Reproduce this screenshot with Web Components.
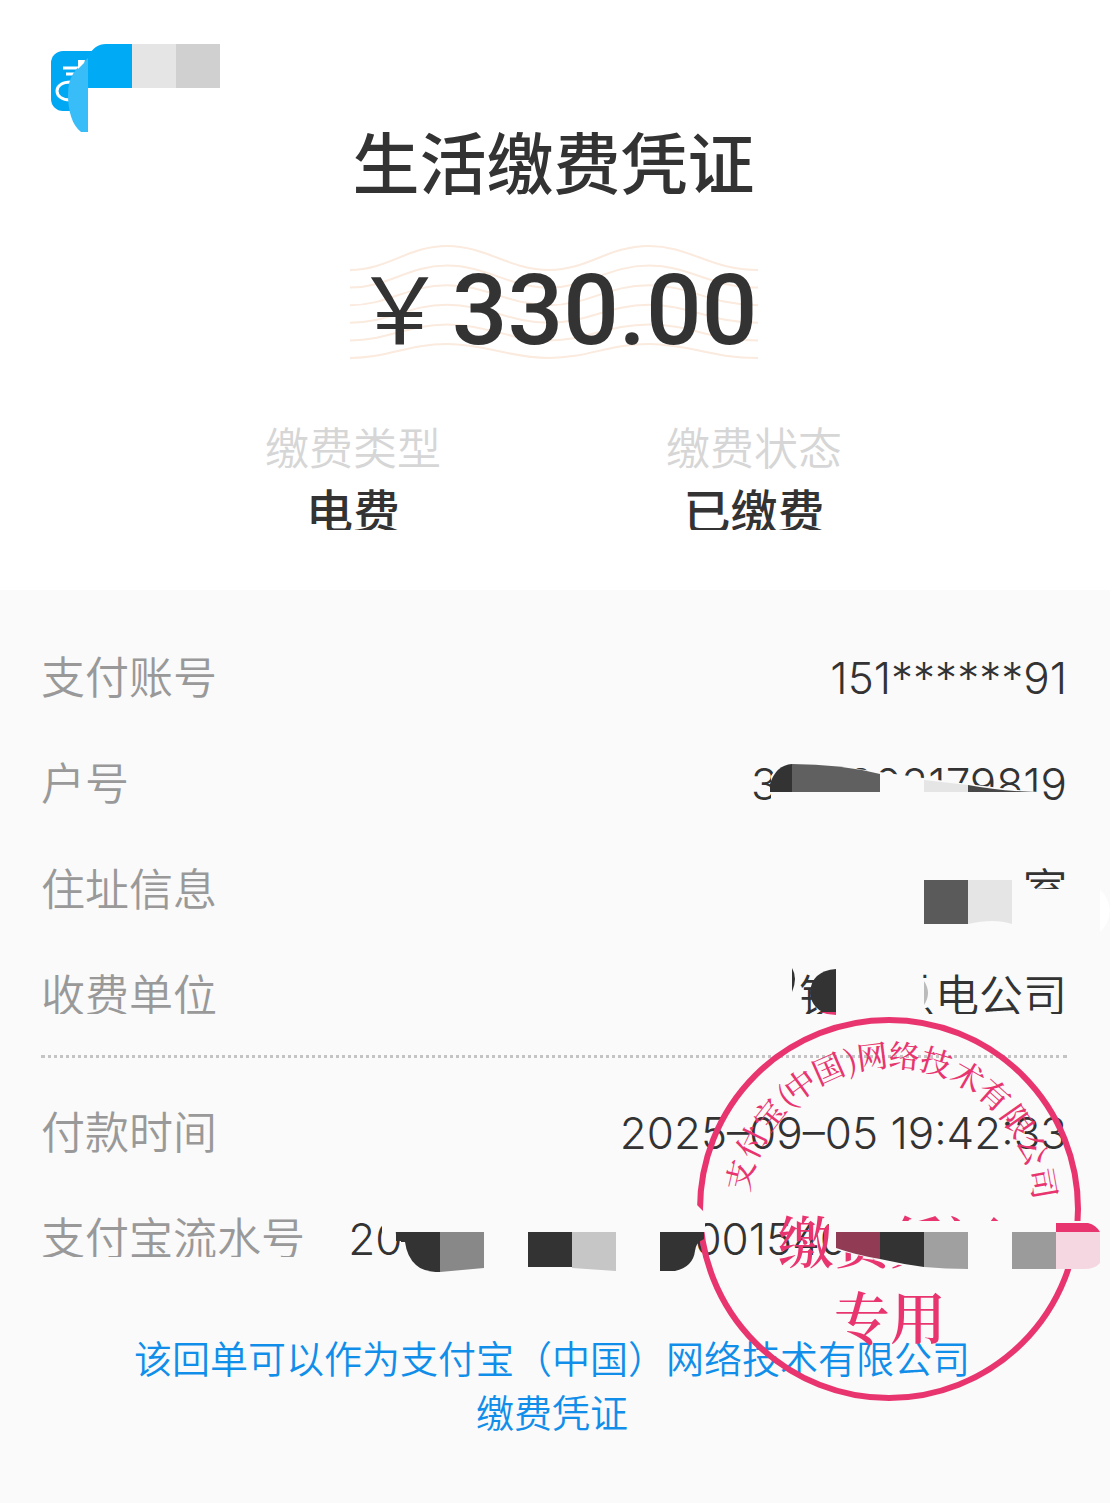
<!DOCTYPE html>
<html lang="zh-CN">
<head>
<meta charset="utf-8">
<meta name="viewport" content="width=device-width, initial-scale=1">
<title>生活缴费凭证</title>
<style>
  body {
    margin: 0;
    background: #fff;
    color: #333;
    font-family: Inter, "Noto Sans CJK SC", sans-serif;
  }
</style>
</head>
<body>
<payment-receipt>
  <receipt-head slot="head">
    <receipt-amount slot="amount">330.00</receipt-amount>
    <receipt-fact label="缴费类型">电费</receipt-fact>
    <receipt-fact label="缴费状态">已缴费</receipt-fact>
  </receipt-head>
  <receipt-row label="支付账号">151******91</receipt-row>
  <receipt-row label="户号">3<hidden-part size="s"></hidden-part>1002179819</receipt-row>
  <receipt-row label="住址信息">室</receipt-row>
  <receipt-row label="收费单位">镇<hidden-part size="m"></hidden-part>供电公司</receipt-row>
  <receipt-divider></receipt-divider>
  <receipt-row label="付款时间">2025–09–05 19:42:33</receipt-row>
  <receipt-row label="支付宝流水号">20<hidden-part size="l"></hidden-part>001540<hidden-part size="xl"></hidden-part></receipt-row>
  <receipt-note slot="note">该回单可以作为支付宝（中国）网络技术有限公司<br>缴费凭证</receipt-note>
  <receipt-marks slot="marks"></receipt-marks>
</payment-receipt>

<script>
class PaymentReceipt extends HTMLElement {
  connectedCallback() {
    this.attachShadow({ mode: 'open' });
    this.shadowRoot.innerHTML = `
      <style>
        :host {
          display: flex;
          flex-direction: column;
          min-height: 100vh;
          margin-right: 3px;
        }
        .details {
          position: relative;
          flex: 1;
          padding: 35px 43px 62px 41px;
          background: #fafafa;
        }
      </style>
      <slot name="head"></slot>
      <section class="details">
        <slot></slot>
        <slot name="note"></slot>
        <slot name="marks"></slot>
      </section>
    `;
  }
}
customElements.define('payment-receipt', PaymentReceipt);

class ReceiptHead extends HTMLElement {
  connectedCallback() {
    this.attachShadow({ mode: 'open' });
    this.shadowRoot.innerHTML = `
      <style>
        :host {
          display: flex;
          flex-direction: column;
          align-items: center;
          position: relative;
          padding: 115px 3px 60px 0;
        }
        .logo {
          position: absolute;
          left: 44px;
          top: 40px;
        }
        h1 {
          margin: 0;
          font-size: 67px;
          line-height: 100px;
          font-weight: 500;
        }
        .facts {
          display: grid;
          grid-template-columns: 1fr 1fr;
          width: 802px;
          max-width: 100%;
          height: 112px;
          margin-top: 58px;
          overflow: hidden;
        }
      </style>
      <svg class="logo" width="180" height="96" viewBox="44 40 180 96" aria-hidden="true">
        <rect x="51" y="51" width="60" height="60" rx="12" fill="#00a8f3"/>
        <path fill="#fff" d="M88 88h23v24H88z"/>
        <g fill="none" stroke="#fff" stroke-width="3">
          <path d="M63 68h15M66 74h10"/>
          <path d="M71 82c-9 0-14 4-14 9s5 9 13 9"/>
        </g>
        <path fill="#38bdf8" d="M88 58c-13 11-20 19-20 36 0 17 4 31 13 38h7z"/>
        <path fill="#fff" d="M78 60h7l-1 3-6 6z"/>
        <path fill="#00aaf5" d="M88 56c5-8 10-12 18-12h26v44H88z"/>
        <path fill="#e5e5e5" d="M132 44h44v44h-44z"/>
        <path fill="#d0d0d0" d="M176 44h44v44h-44z"/>
      </svg>
      <h1>生活缴费凭证</h1>
      <slot name="amount"></slot>
      <div class="facts"><slot></slot></div>
    `;
  }
}
customElements.define('receipt-head', ReceiptHead);

class ReceiptAmount extends HTMLElement {
  connectedCallback() {
    // six guilloche lines that flatten towards the bottom
    let waves = '';
    for (let i = 0; i < 6; i++) {
      const y = 26 + i * 88 / 5;
      const a = 24 - i * 2;
      waves += `<path d="M0 ${y}C38 ${y} 58 ${y - a} 97 ${y - a}S160 ${y} 199 ${y}S258 ${y - a} 299 ${y - a}S360 ${y} 408 ${y}"/>`;
    }
    this.attachShadow({ mode: 'open' });
    this.shadowRoot.innerHTML = `
      <style>
        :host {
          display: flex;
          align-items: baseline;
          justify-content: flex-end;
          position: relative;
          box-sizing: border-box;
          width: 408px;
          height: 116px;
          margin-top: 29px;
          font: 500 98px/120px Roboto, sans-serif;
        }
        svg {
          position: absolute;
          left: 0;
          top: 0;
        }
        .yen {
          position: relative;
          margin-right: 6px;
          font-family: "Noto Sans CJK SC", sans-serif;
          font-size: 92px;
          font-weight: 400;
        }
        .sum {
          position: relative;
        }
      </style>
      <svg width="408" height="118" fill="none" stroke="#fbeade" stroke-width="2" aria-hidden="true">${waves}</svg>
      <span class="yen">￥</span>
      <span class="sum"><slot></slot></span>
    `;
  }
}
customElements.define('receipt-amount', ReceiptAmount);

class ReceiptFact extends HTMLElement {
  connectedCallback() {
    this.attachShadow({ mode: 'open' });
    this.shadowRoot.innerHTML = `
      <style>
        :host {
          display: block;
          text-align: center;
        }
        .label {
          color: #d6d6d6;
          font-size: 44px;
          font-weight: 350;
          line-height: 62px;
        }
        .value {
          font-size: 47px;
          font-weight: 500;
          line-height: 64px;
        }
      </style>
      <div class="label">${this.getAttribute('label')}</div>
      <div class="value"><slot></slot></div>
    `;
  }
}
customElements.define('receipt-fact', ReceiptFact);

class ReceiptRow extends HTMLElement {
  connectedCallback() {
    this.attachShadow({ mode: 'open' });
    this.shadowRoot.innerHTML = `
      <style>
        :host {
          display: flex;
          justify-content: space-between;
          align-items: center;
          height: 106px;
          font-size: 44px;
          font-weight: 350;
          line-height: 60px;
          white-space: nowrap;
        }
        .label {
          color: #999;
        }
        .value {
          display: flex;
        }
      </style>
      <span class="label">${this.getAttribute('label')}</span>
      <span class="value"><slot></slot></span>
    `;
  }
}
customElements.define('receipt-row', ReceiptRow);

class HiddenPart extends HTMLElement {
  connectedCallback() {
    this.attachShadow({ mode: 'open' });
    this.shadowRoot.innerHTML = `
      <style>
        :host { display: inline-block; width: 52px; }
        :host([size="m"]) { width: 48px; }
        :host([size="l"]) { width: 292px; }
        :host([size="xl"]) { width: 220px; }
      </style>
    `;
  }
}
customElements.define('hidden-part', HiddenPart);

class ReceiptDivider extends HTMLElement {
  connectedCallback() {
    this.attachShadow({ mode: 'open' });
    this.shadowRoot.innerHTML = `
      <style>
        :host {
          display: block;
          margin: 6px 0 22px;
          border-top: 3px dotted #c4c4c4;
        }
      </style>
    `;
  }
}
customElements.define('receipt-divider', ReceiptDivider);

class ReceiptNote extends HTMLElement {
  connectedCallback() {
    this.attachShadow({ mode: 'open' });
    this.shadowRoot.innerHTML = `
      <style>
        :host {
          display: block;
          padding: 38px 4px 0 0;
          color: #108ee9;
          font: 350 38px/54px "Noto Sans CJK SC", sans-serif;
          text-align: center;
        }
      </style>
      <slot></slot>
    `;
  }
}
customElements.define('receipt-note', ReceiptNote);

// company seal and the blotted-out patches lying over the rows
class ReceiptMarks extends HTMLElement {
  connectedCallback() {
    const ring = [
      ['支', -77], ['付', -64], ['宝', -52], ['(', -43], ['中', -36], ['国', -24],
      [')', -15], ['网', -7], ['络', 5], ['技', 17], ['术', 30], ['有', 42],
      ['限', 55], ['公', 67], ['司', 80]
    ];
    const glyphs = ring.map(([ch, deg]) =>
      `<text transform="rotate(${deg} 891 1210)" x="891" y="1067">${ch}</text>`).join('');

    this.attachShadow({ mode: 'open' });
    this.shadowRoot.innerHTML = `
      <style>
        :host {
          position: absolute;
          right: 0;
          top: 0;
          pointer-events: none;
        }
        svg { display: block; }
        text {
          font-family: "Noto Serif CJK SC", "Noto Sans CJK SC", serif;
          text-anchor: middle;
        }
        .ring { font-size: 31px; font-weight: 500; }
        .title { font-size: 56px; font-weight: 600; }
      </style>
      <svg width="1110" height="913" viewBox="0 590 1110 913">
        <path fill="#fafafa" d="M30 1014h1050v12H30zM30 1257h300v14H30z"/>
        <g fill="#e8356f">
          <circle cx="889" cy="1209" r="189" fill="none" stroke="#e8356f" stroke-width="6"/>
          <g class="ring">${glyphs}</g>
          <g class="title">
            <text x="890" y="1263">缴费凭证</text>
            <text x="890" y="1339">专用</text>
          </g>
        </g>

        <path fill="#fafafa" d="M771 776C777 766 785 764 800 764C850 765 920 780 1038 792V808H771z"/>
        <path fill="#333" d="M770 792V784Q776 765 792 764V792z"/>
        <path fill="#606060" d="M792 764Q840 764 880 774V792H792z"/>
        <path fill="#e5e5e5" d="M924 780L968 785V792H924z"/>
        <path fill="#484848" d="M968 785Q1000 791 1036 792H968z"/>

        <path fill="#fafafa" d="M1020 889H1072V916H1020zM1020 876L1036 889H1020z"/>
        <path fill="#5a5a5a" d="M924 880h44v44h-44z"/>
        <path fill="#e5e5e5" d="M968 880h44v44q-18-6-44 0z"/>
        <path fill="#fff" d="M1100 890q8 6 10 20q-1 14-10 22z"/>

        <path fill="#fafafa" d="M836 966H922V1014H836z"/>
        <path fill="#fafafa" d="M922 978H936V1004L926 1008H922z"/>
        <path fill="#333" d="M792 968q6 10 0 24z"/>
        <path fill="#333" d="M836 969q-25 2-26 24q2 18 20 21h6z"/>
        <path fill="#e8356f" d="M820 1012q8 3 16 3v-3z"/>
        <path fill="#bbb" d="M924 981q8 12 0 24z"/>

        <path fill="#fafafa" d="M690 1203L697 1205L705 1213V1232H690z"/>
        <path fill="#fafafa" d="M382 1222H400V1242H404V1262H400V1232H382z"/>
        <path fill="#333" d="M396 1232h44v40q-17 0-24-7q-9-8-11-23h-4v-1h-5z"/>
        <path fill="#888" d="M440 1232h44v36l-44 4z"/>
        <path fill="#333" d="M528 1232h44v35h-44z"/>
        <path fill="#c6c6c6" d="M572 1232h44v39l-44-3z"/>
        <path fill="#333" d="M660 1232h44v7q-8 3-9 12q-2 16-20 20h-15z"/>

        <path fill="#fafafa" d="M829 1212H896V1221H1088V1268H968L900 1265L836 1250V1240H829z"/>
        <path fill="#913b54" d="M836 1232h44v27q-24-4-44-11z"/>
        <path fill="#333" d="M880 1232h44v35q-22-3-44-8z"/>
        <path fill="#a0a0a0" d="M924 1232h44v37q-22 0-44-2z"/>
        <path fill="#9b9b9b" d="M1012 1232h44v37h-44z"/>
        <path fill="#e8356f" d="M1056 1223h32q8 2 12 9h-44z"/>
        <path fill="#f5d7e1" d="M1056 1232h44v31q-5 6-16 6h-28z"/>
      </svg>
    `;
  }
}
customElements.define('receipt-marks', ReceiptMarks);
</script>
</body>
</html>
